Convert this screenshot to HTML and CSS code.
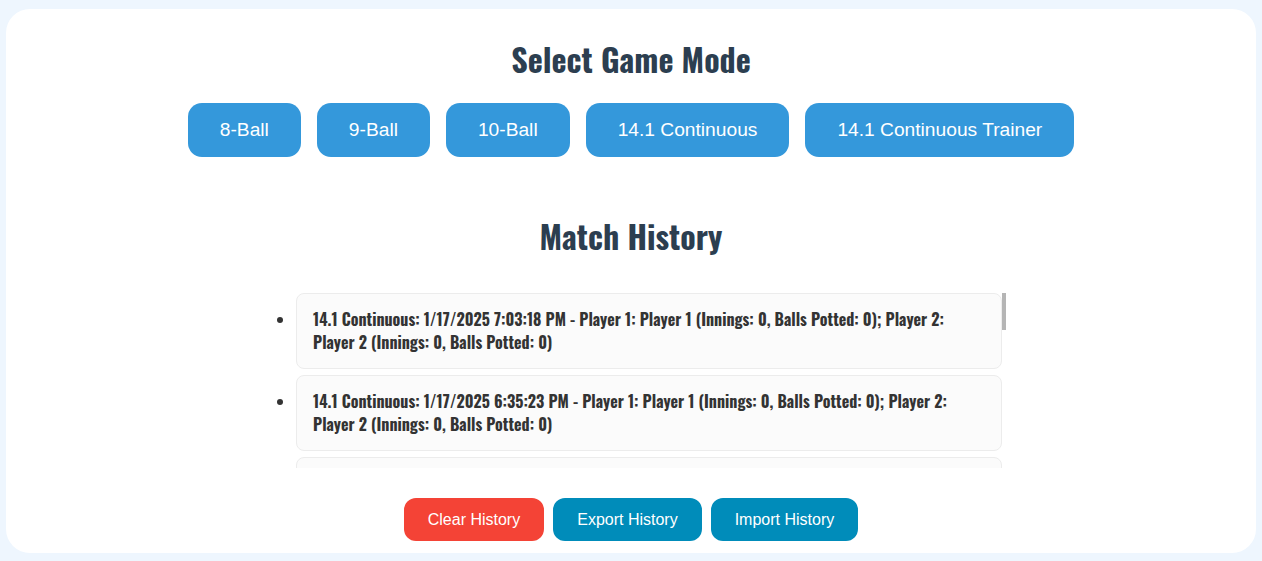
FILE: index.html
```html
<!DOCTYPE html>
<html lang="en">
<head>
<meta charset="utf-8">
<title>Pool Scorekeeper</title>
<link rel="stylesheet" href="styles.css">
</head>
<body>
<main class="card">
  <h2 class="title">Select Game Mode</h2>
  <div class="modes">
    <button class="mode-btn">8-Ball</button>
    <button class="mode-btn">9-Ball</button>
    <button class="mode-btn">10-Ball</button>
    <button class="mode-btn">14.1 Continuous</button>
    <button class="mode-btn">14.1 Continuous Trainer</button>
  </div>
  <h2 class="title history-title">Match History</h2>
  <div class="history-wrap">
    <ul class="history">
      <li>14.1 Continuous: 1/17/2025 7:03:18 PM - Player 1: Player 1 (Innings: 0, Balls Potted: 0); Player 2: Player 2 (Innings: 0, Balls Potted: 0)</li>
      <li>14.1 Continuous: 1/17/2025 6:35:23 PM - Player 1: Player 1 (Innings: 0, Balls Potted: 0); Player 2: Player 2 (Innings: 0, Balls Potted: 0)</li>
      <li>14.1 Continuous: 1/17/2025 6:12:05 PM - Player 1: Player 1 (Innings: 0, Balls Potted: 0); Player 2: Player 2 (Innings: 0, Balls Potted: 0)</li>
      <li>14.1 Continuous: 1/17/2025 5:48:41 PM - Player 1: Player 1 (Innings: 0, Balls Potted: 0); Player 2: Player 2 (Innings: 0, Balls Potted: 0)</li>
      <li>14.1 Continuous: 1/17/2025 5:20:10 PM - Player 1: Player 1 (Innings: 0, Balls Potted: 0); Player 2: Player 2 (Innings: 0, Balls Potted: 0)</li>
      <li>14.1 Continuous: 1/17/2025 4:57:32 PM - Player 1: Player 1 (Innings: 0, Balls Potted: 0); Player 2: Player 2 (Innings: 0, Balls Potted: 0)</li>
      <li>14.1 Continuous: 1/17/2025 4:31:09 PM - Player 1: Player 1 (Innings: 0, Balls Potted: 0); Player 2: Player 2 (Innings: 0, Balls Potted: 0)</li>
      <li>14.1 Continuous: 1/17/2025 4:02:47 PM - Player 1: Player 1 (Innings: 0, Balls Potted: 0); Player 2: Player 2 (Innings: 0, Balls Potted: 0)</li>
      <li>14.1 Continuous: 1/17/2025 3:40:15 PM - Player 1: Player 1 (Innings: 0, Balls Potted: 0); Player 2: Player 2 (Innings: 0, Balls Potted: 0)</li>
      <li>14.1 Continuous: 1/17/2025 3:11:58 PM - Player 1: Player 1 (Innings: 0, Balls Potted: 0); Player 2: Player 2 (Innings: 0, Balls Potted: 0)</li>
      <li>14.1 Continuous: 1/17/2025 2:45:36 PM - Player 1: Player 1 (Innings: 0, Balls Potted: 0); Player 2: Player 2 (Innings: 0, Balls Potted: 0)</li>
    </ul>
  </div>
  <div class="actions">
    <button class="act-btn clear">Clear History</button>
    <button class="act-btn export">Export History</button>
    <button class="act-btn import">Import History</button>
  </div>
</main>
</body>
</html>
```
FILE: styles.css
```css
html, body {
  margin: 0;
  padding: 0;
  background: #eef6fe;
  height: 100%;
}
body {
  padding: 9px 6px 8px;
  box-sizing: border-box;
}
.card {
  background: #ffffff;
  border-radius: 24px;
  height: 544px;
  box-sizing: border-box;
  padding: 35px 20px 0;
  text-align: center;
  overflow: hidden;
}
.title {
  font-family: "Oswald", "Liberation Sans Narrow", "DejaVu Sans Condensed", "Liberation Sans", sans-serif;
  font-weight: 700;
  font-size: 32px;
  line-height: 30px;
  color: #2c3e50;
  margin: 0;
}
.modes {
  display: flex;
  justify-content: center;
  gap: 16px;
  margin-top: 29px;
}
.mode-btn {
  font-family: "Liberation Sans", Arial, sans-serif;
  font-size: 19.2px;
  line-height: 22px;
  padding: 16px 32px;
  border: none;
  border-radius: 14px;
  background: #3498db;
  color: #ffffff;
}
.history-title {
  margin-top: 64px;
}
.history-wrap {
  position: relative;
  width: 750px;
  margin: 42px auto 0;
}
.history-wrap::after {
  content: "";
  position: absolute;
  top: 0;
  right: 0;
  width: 4px;
  height: 37px;
  background: #b5b5b5;
}
.history {
  height: 175px;
  margin: 0;
  padding: 0 4px 0 40px;
  box-sizing: border-box;
  overflow-y: auto;
  text-align: left;
  color: #333333;
  scrollbar-width: none;
}
.history::-webkit-scrollbar {
  display: none;
}
.history li {
  font-family: "Oswald", "Liberation Sans Narrow", "DejaVu Sans Condensed", "Liberation Sans", sans-serif;
  font-weight: 700;
  font-size: 16px;
  line-height: 23px;
  background: #fbfbfb;
  border: 1px solid #ececec;
  border-radius: 8px;
  padding: 14px 16px;
  margin-bottom: 6px;
}
.actions {
  display: flex;
  justify-content: center;
  gap: 9px;
  margin-top: 30px;
}
.act-btn {
  font-family: "Liberation Sans", Arial, sans-serif;
  font-size: 16px;
  line-height: 19px;
  padding: 12px 24px;
  border: none;
  border-radius: 12px;
  color: #ffffff;
}
.clear {
  background: #f44336;
}
.export, .import {
  background: #008cba;
}
```
